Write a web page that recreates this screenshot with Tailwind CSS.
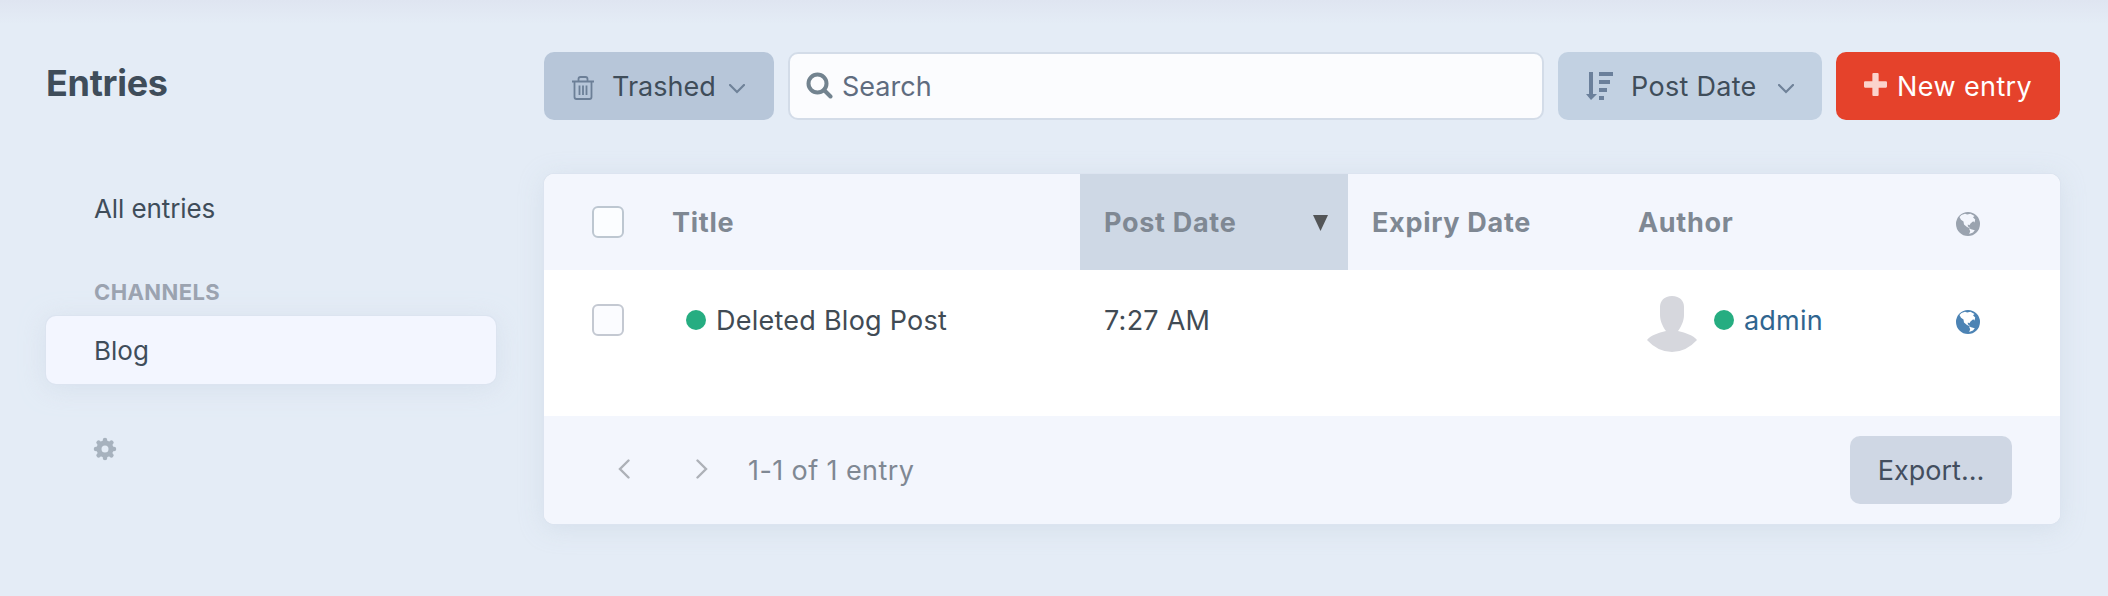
<!DOCTYPE html>
<html lang="en">
<head>
  <meta charset="UTF-8" />
  <meta name="viewport" content="width=device-width, initial-scale=1.0" />
  <title>Entries</title>
  <script src="https://cdn.jsdelivr.net/npm/@tailwindcss/browser@4"></script>
</head>
<body class="h-[596px] overflow-hidden bg-[#e4ecf6] font-['Inter','Liberation_Sans',sans-serif] text-[27px] leading-9 text-[#3f4d5a]">

  <!-- Shared icons -->
  <svg class="hidden">
    <symbol id="globe" viewBox="0 0 24 24">
      <path fill-rule="evenodd" d="M12 0a12 12 0 1 1 0 24a12 12 0 0 1 0-24zM3.500 5L5.500 3L9 1.800L11.200 2.600L14.500 1.800L18.500 4L17 5.200L19.200 7.400L18.500 10.500L17.200 9.200L14.500 11.500L13.500 13.200L11.800 12.400L11.800 14.200L14.500 16.500L11 15L8 12.500L7.500 9.500L5 7.800zM13 16.600L16 17.600L18.800 18.200L17 20.600L13.200 22L14.200 19.200z"/>
    </symbol>
  </svg>

  <div class="h-6 bg-gradient-to-b from-[#dfe5f1] to-[#e4ecf6]"></div>

  <div class="flex gap-12 px-[46px] pt-7">

    <!-- Sidebar -->
    <aside class="w-[450px] shrink-0">
      <h1 class="pt-[9px] text-[36px] leading-[44px] font-bold tracking-[-0.3px]">Entries</h1>
      <nav>
        <a class="mt-[70px] flex h-[68px] items-center pl-12 text-[26px] tracking-[-0.1px]">All entries</a>
        <h2 class="mt-[27px] flex h-[46px] items-center pb-0.5 pl-12 text-[22px] font-bold tracking-[0.4px] text-[#9ba3b0]">CHANNELS</h2>
        <a class="flex h-[68px] items-center rounded-[10px] bg-[#f3f6ff] pt-0.5 pl-12 text-[26px] shadow-[0_0_0_1px_#dce4f0,0_4px_24px_rgba(205,216,230,0.6)]">Blog</a>
      </nav>
      <svg class="mt-[53px] ml-[47px] size-6" viewBox="0 0 24 24" fill="none" stroke="#a7b2be">
        <circle cx="12" cy="12" r="6" stroke-width="5"/>
        <path stroke-width="4.5" stroke-linecap="round" d="M12 3v2M12 19v2M3 12h2M19 12h2M5.6 5.6l1.4 1.4M17 17l1.4 1.4M5.6 18.4l1.4-1.4M17 7l1.4-1.4"/>
      </svg>
    </aside>

    <main class="w-[1516px] shrink-0">

      <!-- Toolbar -->
      <div class="flex h-[68px] gap-3.5">
        <button class="flex w-[230px] items-center rounded-[10px] bg-[#b7c6d9] pl-[27px]">
          <svg class="mt-1 size-6" viewBox="0 0 24 24" fill="none" stroke="#6c7f97" stroke-width="1.8" stroke-linejoin="round">
            <path d="M1 5.5h22M7.5 5V3q0-2 2-2h5q2 0 2 2v2M3.5 5.5V21q0 2 2 2h13q2 0 2-2V5.5M8.5 9.5V19M12 9.5V19M15.5 9.5V19"/>
          </svg>
          <span class="ml-[17px] pt-0.5">Trashed</span>
          <svg class="mt-1.5 ml-[13px] h-2.5 w-4" viewBox="0 0 16 10" fill="none" stroke="#6f8299" stroke-width="2.2" stroke-linecap="round"><path d="M1 1l7 7 7-7"/></svg>
        </button>
        <div class="flex flex-1 items-center rounded-[10px] border-2 border-[#d3dce8] bg-[#fbfcfe] pl-4 text-[#5f6c7f]">
          <svg class="mb-0.5 size-[27px]" viewBox="0 0 27 27" fill="none" stroke="#72838f" stroke-width="4">
            <circle cx="11.5" cy="11.5" r="9"/>
            <path stroke-linecap="round" d="M18 18l6.5 6.5"/>
          </svg>
          <span class="ml-[9px] pt-0.5">Search</span>
        </div>
        <button class="flex w-[264px] items-center rounded-[10px] bg-[#c2d1e2] pl-7">
          <svg class="size-7" viewBox="0 0 28 28" fill="#6b809b">
            <path d="M3 0h4v22h4l-6 6-5-6h3zM13 0h14v4H13zM13 8h11v4H13zM13 16h8v4h-8zM13 24h5v4h-5z"/>
          </svg>
          <span class="ml-[17px] pt-0.5 tracking-[0.3px]">Post Date</span>
          <svg class="mt-1.5 ml-[21px] h-2.5 w-4" viewBox="0 0 16 10" fill="none" stroke="#6f8299" stroke-width="2.2" stroke-linecap="round"><path d="M1 1l7 7 7-7"/></svg>
        </button>
        <button class="flex w-[224px] items-center rounded-[10px] bg-[#e5422b] pl-7 text-white">
          <svg class="mb-1 size-[23px]" viewBox="0 0 22 22" fill="#fbd3cc">
            <path d="M9 0h4q1 0 1 1v7h7q1 0 1 1v4q0 1-1 1h-7v7q0 1-1 1H9q-1 0-1-1v-7H1q-1 0-1-1V9q0-1 1-1h7V1q0-1 1-1z"/>
          </svg>
          <span class="ml-2.5 pt-0.5 tracking-[0.4px]">New entry</span>
        </button>
      </div>

      <!-- Entry table -->
      <section class="mt-[54px] overflow-hidden rounded-[10px] bg-white shadow-[0_0_0_1px_#dce4f0,0_4px_24px_rgba(205,216,230,0.7)]">
        <div class="grid h-24 grid-cols-[128px_408px_268px_266px_446px] items-center bg-[#f3f6fd] text-[27px] font-bold tracking-[0.7px] text-[#7f8893]">
          <div class="ml-12 size-8 rounded-md border-2 border-[#bdc7d1] bg-[#fbfdff]"></div>
          <div class="pt-0.5">Title</div>
          <div class="flex h-full items-center justify-between bg-[#ced8e5] pt-0.5 pr-5 pl-6">
            Post Date
            <svg class="h-4 w-[15px]" viewBox="0 0 15 16" fill="#535557"><path d="M0 0h15L7.5 16z"/></svg>
          </div>
          <div class="pt-0.5 pl-6">Expiry Date</div>
          <div class="flex items-center justify-between pt-0.5 pr-20 pl-6">
            Author
            <svg class="mt-0.5 size-6 fill-[#9aa3af]"><use href="#globe"/></svg>
          </div>
        </div>

        <div class="grid h-[146px] grid-cols-[128px_408px_268px_266px_446px] text-[#414b54]">
          <div class="pt-[34px] pl-12"><div class="size-8 rounded-md border-2 border-[#c4c9d2] bg-[#fbfcff]"></div></div>
          <div class="flex h-[100px] items-center pl-3.5">
            <span class="mr-2.5 size-5 rounded-full bg-[#26ad81]"></span>
            <span class="pt-0.5 tracking-[0.25px]">Deleted Blog Post</span>
          </div>
          <div class="flex h-[100px] items-center pt-0.5 pl-6 tracking-[0.25px]">7:27 AM</div>
          <div></div>
          <div class="flex h-[100px] items-center justify-between pr-20 pl-[33px]">
            <div class="flex items-center text-[#2f658f]">
              <svg class="mt-2 h-14 w-[50px]" viewBox="0 0 50 56" fill="#d6d7dd">
                <path d="M25 0c8 0 12 5 12 11v8c0 6-3 12-6 16 8 2 15 4 19 9q-11 12-25 12T0 44c4-5 11-7 19-9-3-4-6-10-6-16v-8C13 5 17 0 25 0z"/>
              </svg>
              <span class="mr-2.5 ml-[17px] size-5 rounded-full bg-[#26ad81]"></span>
              <span class="pt-0.5 tracking-[0.2px]">admin</span>
            </div>
            <svg class="mt-1 size-6 fill-[#4c83b4]"><use href="#globe"/></svg>
          </div>
        </div>

        <footer class="flex h-[108px] items-center bg-[#f3f6fd] pr-12 pl-[74px] text-[#7f8893]">
          <svg class="mb-0.5 h-5 w-3" viewBox="0 0 12 20" fill="none" stroke="#adb1b8" stroke-width="2.4" stroke-linecap="round"><path d="M10.5 1.5L2 10l8.5 8.5"/></svg>
          <svg class="mb-0.5 ml-[66px] h-5 w-3" viewBox="0 0 12 20" fill="none" stroke="#adb1b8" stroke-width="2.4" stroke-linecap="round"><path d="M1.5 1.5L10 10l-8.5 8.5"/></svg>
          <span class="ml-10 pt-0.5 tracking-[0.4px]">1-1 of 1 entry</span>
          <button class="ml-auto h-[68px] w-[162px] rounded-[10px] bg-[#cfd7e4] pt-0.5 text-[#434e5f]">Export…</button>
        </footer>
      </section>
    </main>
  </div>

</body>
</html>
